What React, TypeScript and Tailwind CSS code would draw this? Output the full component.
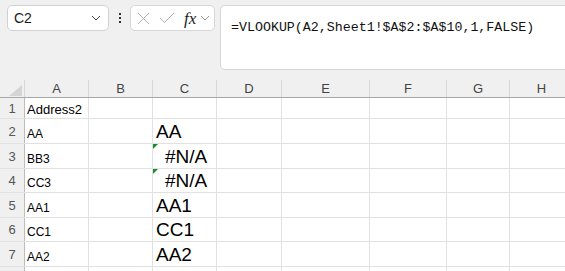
import React from "react";

const cols = [
  { id: "A", w: "w-[64px]" },
  { id: "B", w: "w-[64px]" },
  { id: "C", w: "w-[64px]" },
  { id: "D", w: "w-[65px]" },
  { id: "E", w: "w-[88px]" },
  { id: "F", w: "w-[77px]" },
  { id: "G", w: "w-[63px]" },
  { id: "H", w: "w-[64px]" },
];

type Row = {
  n: number;
  h: string;
  a: string;
  c?: string;
  err?: boolean;
};

const rows: Row[] = [
  { n: 1, h: "h-[21px]", a: "Address2" },
  { n: 2, h: "h-[25px]", a: "AA", c: "AA" },
  { n: 3, h: "h-[25px]", a: "BB3", c: "#N/A", err: true },
  { n: 4, h: "h-[24px]", a: "CC3", c: "#N/A", err: true },
  { n: 5, h: "h-[25px]", a: "AA1", c: "AA1" },
  { n: 6, h: "h-[24px]", a: "CC1", c: "CC1" },
  { n: 7, h: "h-[25px]", a: "AA2", c: "AA2" },
  { n: 8, h: "h-[25px]", a: "" },
];

function Chevron({ className = "" }: { className?: string }) {
  return (
    <svg width="10" height="6" viewBox="0 0 10 6" className={className}>
      <path d="M1 1 L5 5 L9 1" fill="none" stroke="currentColor" strokeWidth="1" />
    </svg>
  );
}

function Toolbar() {
  return (
    <div className="flex h-[78px] pl-[7px] pt-[5px] items-start">
      {/* name box */}
      <div className="w-[102px] h-[26px] bg-white border border-[#d1d1d1] rounded-[5px] flex items-center justify-between pl-[6px] pr-[7px]">
        <span className="text-[14px] text-[#1a1a1a] leading-none">C2</span>
        <Chevron className="text-[#444]" />
      </div>

      {/* more */}
      <div className="w-[21px] h-[26px] flex flex-col items-center justify-center gap-[2px]">
        <span className="w-[2px] h-[2px] bg-[#333]" />
        <span className="w-[2px] h-[2px] bg-[#333]" />
        <span className="w-[2px] h-[2px] bg-[#333]" />
      </div>

      {/* cancel / enter / fx */}
      <div className="w-[85px] h-[26px] bg-white border border-[#d6d6d6] rounded-[5px] flex items-center pl-[6px]">
        <svg width="13" height="13" viewBox="0 0 13 13">
          <path d="M1 1 L12 12 M12 1 L1 12" stroke="#b3b3b3" strokeWidth="1" />
        </svg>
        <svg width="16" height="12" viewBox="0 0 16 12" className="ml-[9px]">
          <path d="M1 6 L5.5 10.5 L15 1" fill="none" stroke="#b3b3b3" strokeWidth="1" />
        </svg>
        <span
          className="ml-[9px] text-[17px] italic text-[#222] leading-none"
          style={{ fontFamily: '"Liberation Serif", serif' }}
        >
          fx
        </span>
        <Chevron className="ml-[4px] text-[#999]" />
      </div>

      {/* formula box */}
      <div className="ml-[5px] flex-1 -mr-[10px] h-[65px] bg-white border border-[#d6d6d6] rounded-[5px] pl-[10px] pt-[8px]">
        <span
          className="text-[13.3px] text-[#111] leading-none whitespace-nowrap"
          style={{ fontFamily: '"Liberation Mono", monospace' }}
        >
          =VLOOKUP(A2,Sheet1!$A$2:$A$10,1,FALSE)
        </span>
      </div>
    </div>
  );
}

function HeaderRow() {
  return (
    <div className="flex h-[20px] border-b border-[#a8a8a8]">
      <div className="w-[25px] shrink-0 flex flex-col">
        <div className="mt-[2px] flex-1 border-r border-[#d6d6d6] flex items-end justify-end pr-[2px] pb-[1px]">
          <svg width="13" height="11" viewBox="0 0 13 11">
            <polygon points="13,0 13,11 0,11" fill="#d4d4d4" />
          </svg>
        </div>
      </div>
      {cols.map((c) => (
        <div key={c.id} className={`${c.w} shrink-0 flex flex-col`}>
          <div className="mt-[2px] flex-1 border-r border-[#d6d6d6] flex items-center justify-center text-[13px] text-[#444] leading-none">
            {c.id}
          </div>
        </div>
      ))}
    </div>
  );
}

function DataRow({ row }: { row: Row }) {
  const small = row.n === 1 ? "text-[13px] pb-[2px]" : "text-[12px] pb-[3px]";
  return (
    <div className={`flex ${row.h} border-b border-[#e1e1e1]`}>
      <div className="w-[25px] shrink-0 bg-[#f0f0f0] border-r border-[#bdbdbd] flex items-center justify-center text-[13px] text-[#555] leading-none">
        {row.n}
      </div>
      {cols.map((c) => {
        const isA = c.id === "A";
        const isC = c.id === "C";
        return (
          <div
            key={c.id}
            className={`${c.w} shrink-0 relative border-r border-[#e1e1e1] flex items-end leading-none text-black ${
              isC && row.err ? "justify-center" : "pl-[2px]"
            } ${isA ? small : ""} ${isC ? "text-[19px] pb-[2px] pl-[3px]" : ""}`}
          >
            {isA && row.a}
            {isC && row.c}
            {isC && row.err && (
              <svg width="5" height="5" viewBox="0 0 5 5" className="absolute left-0 top-0">
                <polygon points="0,0 5,0 0,5" fill="#1e8a2e" />
              </svg>
            )}
          </div>
        );
      })}
    </div>
  );
}

export default function App() {
  return (
    <div
      className="w-[565px] h-[271px] overflow-hidden bg-[#f0f0f0]"
      style={{ fontFamily: '"Liberation Sans", Arial, sans-serif' }}
    >
      <Toolbar />
      <HeaderRow />
      <div className="bg-white">
        {rows.map((r) => (
          <DataRow key={r.n} row={r} />
        ))}
      </div>
    </div>
  );
}
